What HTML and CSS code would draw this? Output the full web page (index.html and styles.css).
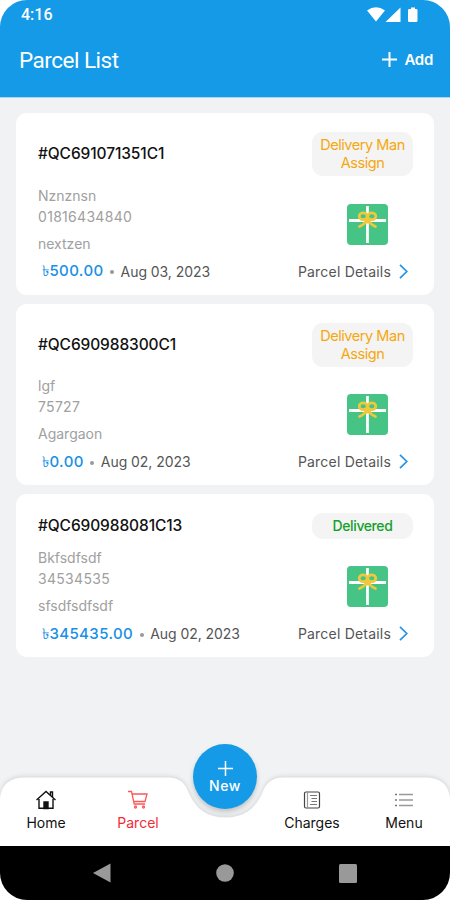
FILE: index.html
```html
<!DOCTYPE html>
<html lang="en">
<head>
<meta charset="utf-8">
<title>Parcel List</title>
<link rel="stylesheet" href="styles.css">
</head>
<body>
<svg class="defs" width="0" height="0" aria-hidden="true">
  <symbol id="gift" viewBox="0 0 41 41">
    <rect width="41" height="41" rx="4" fill="#45c486"/>
    <path d="M20.5 2v37M2 16.5h37" stroke="#fff" stroke-width="2.8"/>
    <g fill="none" stroke="#f0c83c" stroke-width="2.7" stroke-linecap="round">
      <ellipse cx="16.2" cy="12.3" rx="4" ry="3.4"/>
      <ellipse cx="24.8" cy="12.3" rx="4" ry="3.4"/>
      <path d="M19 17c-1.500 3.500-4 4.500-6.500 5.500M22 17c1.500 3.500 4 4.500 6.500 5.500"/>
    </g>
    <rect x="17.500" y="14.500" width="6" height="5" rx="2" fill="#f0c83c"/>
  </symbol>
  <symbol id="chevron" viewBox="0 0 9 15"><path d="M1 .8 7.800 7.500 1 14.200" fill="none" stroke="#2395e6" stroke-width="1.700"/></symbol>
</svg>
<div class="screen">
  <header class="header">
    <div class="status">
      <span class="time">4:16</span>
      <svg class="signals" width="52" height="16" viewBox="0 0 52 16" fill="#fff">
        <path d="M0 3.500Q9-3 18 3.500L9 14.500Z"/>
        <path d="M33.500.500V15H18.500Z"/>
        <path d="M41.500 2H44V.500h4V2h1.200q1.300 0 1.300 1.300v10.400q0 1.300-1.300 1.300h-6.900q-1.300 0-1.300-1.300V3.300Q41 2 42.300 2Z"/>
      </svg>
    </div>
    <div class="titlebar">
      <h1>Parcel List</h1>
      <div class="add">
        <svg width="15" height="15" viewBox="0 0 15 15"><path d="M7.500 0v15M0 7.500h15" stroke="#fff" stroke-width="2"/></svg>
        <span>Add</span>
      </div>
    </div>
  </header>
  <main class="list">
    <article class="card">
      <div class="top"><h2>#QC691071351C1</h2><div class="badge pending">Delivery Man<br>Assign</div></div>
      <div class="body">
        <div class="info"><p>Nznznsn</p><p class="phone">01816434840</p><p class="address">nextzen</p></div>
        <svg class="gift"><use href="#gift"/></svg>
      </div>
      <div class="foot"><span class="price">৳500.00</span><i class="dot"></i><span class="date">Aug 03, 2023</span><span class="details">Parcel Details</span><svg class="chev"><use href="#chevron"/></svg></div>
    </article>
    <article class="card">
      <div class="top"><h2>#QC690988300C1</h2><div class="badge pending">Delivery Man<br>Assign</div></div>
      <div class="body">
        <div class="info"><p>lgf</p><p class="phone">75727</p><p class="address">Agargaon</p></div>
        <svg class="gift"><use href="#gift"/></svg>
      </div>
      <div class="foot"><span class="price">৳0.00</span><i class="dot"></i><span class="date">Aug 02, 2023</span><span class="details">Parcel Details</span><svg class="chev"><use href="#chevron"/></svg></div>
    </article>
    <article class="card compact">
      <div class="top"><h2>#QC690988081C13</h2><div class="badge done">Delivered</div></div>
      <div class="body">
        <div class="info"><p>Bkfsdfsdf</p><p class="phone">34534535</p><p class="address">sfsdfsdfsdf</p></div>
        <svg class="gift"><use href="#gift"/></svg>
      </div>
      <div class="foot"><span class="price">৳345435.00</span><i class="dot"></i><span class="date">Aug 02, 2023</span><span class="details">Parcel Details</span><svg class="chev"><use href="#chevron"/></svg></div>
    </article>
  </main>
  <nav class="tabs">
    <svg class="bar" width="450" height="76" viewBox="0 0 450 76">
      <path d="M0 76V28Q2 7 25 7H166C181 7 185 13 189 23C196 39 208 47 225.500 47C243 47 255 39 262 23C266 13 271 7 284 7H425Q448 7 450 28V76Z" transform="translate(0 -6.500)" fill="#fff"/>
      <path d="M0 66h450v10H0z" fill="#fff"/>
    </svg>
    <div class="items">
      <div class="tab">
        <svg width="22" height="20" viewBox="0 0 22 20" fill="none" stroke="#111" stroke-width="1.400"><path d="M1.500 10 11 1.500 20.500 10M4 9v9.300h14V9M15.500 5V2h2v5"/><path d="M9 18.500V12h4v6.500Z" fill="#111"/></svg>
        <span>Home</span>
      </div>
      <div class="tab active">
        <svg width="22" height="20" viewBox="0 0 22 20" fill="none" stroke="#fa5a5a" stroke-width="1.300"><path d="M1 1.500h3.500L7.200 14H18M5 4h15l-2 7.500H6.700"/><circle cx="8.500" cy="17" r="1"/><circle cx="16.500" cy="17" r="1"/></svg>
        <span>Parcel</span>
      </div>
      <div class="tab charges">
        <svg width="22" height="20" viewBox="0 0 22 20" fill="none" stroke="#444" stroke-width="1.200"><rect x="3.500" y="2" width="15" height="16" rx="1.500"/><path d="M6.500 2v16" stroke="#999"/><path d="M9 5.500h7M10.500 8.500H16M10.500 11.500H16M9 14.500h7" stroke="#777"/></svg>
        <span>Charges</span>
      </div>
      <div class="tab menu">
        <svg width="22" height="20" viewBox="0 0 22 20" stroke="#999" stroke-width="1.400"><path d="M6 4.500h14M6 10h14M6 15.500h14"/><path d="M2 4.500h2M2 10h2M2 15.500h2" stroke="#777"/></svg>
        <span>Menu</span>
      </div>
    </div>
    <div class="fab">
      <svg width="15" height="15" viewBox="0 0 15 15"><path d="M7.500 0v15M0 7.500h15" stroke="#fff" stroke-width="1.500"/></svg>
      <span>New</span>
    </div>
  </nav>
  <footer class="system">
    <svg width="18" height="20" viewBox="0 0 18 20"><path d="M0 10 17.500.500v19Z" fill="#999"/></svg>
    <svg width="18" height="18" viewBox="0 0 18 18"><circle cx="9" cy="9" r="8.800" fill="#999"/></svg>
    <svg width="18" height="19" viewBox="0 0 18 19"><rect width="18" height="19" rx="1.500" fill="#999"/></svg>
  </footer>
</div>
</body>
</html>
```
FILE: styles.css
```css
* { box-sizing: border-box; }
body { margin: 0; background: #fff; font-family: Inter, "Noto Sans", sans-serif; }
h1, h2, p { margin: 0; font-weight: 400; }
svg { display: block; flex: none; }
.defs { position: absolute; }
.screen { width: 450px; height: 900px; display: flex; flex-direction: column; background: #f0f2f4; border-radius: 27px; overflow: hidden; }
.header { height: 98px; background: #149ae7; color: #fff; border-bottom: 1px solid #a9d5f3; }
.status { height: 30px; padding: 0 31px 0 21px; display: flex; justify-content: space-between; align-items: center; }
.time { font: 500 16px/30px Roboto, sans-serif; }
.signals { margin-top: -1px; }
.titlebar { height: 60px; padding: 0 17px 0 19px; display: flex; align-items: center; justify-content: space-between; }
h1 { font-family: Roboto, sans-serif; font-size: 22.5px; letter-spacing: -.5px; }
.add { display: flex; align-items: center; gap: 7px; font-size: 15px; font-weight: 600; letter-spacing: -.3px; margin-top: -1px; }
.list { flex: 1; padding: 15px 16px 0; display: flex; flex-direction: column; gap: 9px; }
.card { background: #fff; border-radius: 11px; padding: 19px 21px 13px 22px; }
.top { display: flex; justify-content: space-between; align-items: center; }
h2 { font-size: 15.5px; font-weight: 500; color: #111; letter-spacing: -.1px; line-height: 19px; padding-bottom: 1px; white-space: nowrap; }
.badge { width: 101px; padding: 4px 0; border-radius: 11px; background: #f4f4f4; text-align: center; font-size: 14.500px; line-height: 18px; letter-spacing: -.45px; }
.pending { color: #f5a80e; }
.done { color: #14a02c; font-size: 14px; font-weight: 500; letter-spacing: -.4px; margin-top: -1px; }
.body { display: flex; justify-content: space-between; margin-top: 9.500px; }
.compact .top { height: 26px; }
.compact .body { margin-top: 9px; }
.info { font-size: 14px; line-height: 21px; color: #a0a0a0; margin-top: -1px; padding-bottom: 1px; }
.phone { letter-spacing: .3px; }
.address { margin-top: 6px; }
.gift { width: 41px; height: 41px; margin: 18px 25px 0 0; }
.foot { display: flex; align-items: center; height: 21px; margin-top: 6px; font-size: 14px; line-height: 21px; white-space: nowrap; }
.price { margin: -1px 0 0 4px; font-size: 15px; font-weight: 500; color: #1790e5; letter-spacing: .4px; }
.dot { width: 4px; height: 4px; margin: 2px 6.5px 0; border-radius: 50%; background: #999; }
.date { color: #555; letter-spacing: -.05px; }
.details { margin-left: auto; color: #555; letter-spacing: .2px; }
.chev { width: 9px; height: 15px; margin: 0 5px 0 8px; }
.tabs { position: relative; height: 69px; margin-bottom: 0; }
.bar { position: absolute; left: 0; top: 0; filter: drop-shadow(0 -1px 2px rgba(0,0,0,.12)); }
.items { position: relative; display: grid; grid-template-columns: 92px 92px 82px 92px 92px; padding-top: 13px; }
.tab { display: flex; flex-direction: column; align-items: center; gap: 3px; font-size: 14px; line-height: 20px; color: #111; }
.active { color: #f22b35; }
.charges { grid-column: 4; }
.menu { grid-column: 5; }
.fab { position: absolute; left: 193px; top: -33px; width: 64px; height: 65px; border-radius: 50%; background: #149ae7; color: #fff; display: flex; flex-direction: column; align-items: center; padding-top: 17px; gap: 1px; font-size: 14px; line-height: 18px; font-weight: 500; letter-spacing: .6px; box-shadow: 0 3px 5px rgba(0,0,0,.2); }
.system { position: relative; height: 54px; background: #000; display: flex; align-items: center; justify-content: space-between; padding: 0 93px; }
```
